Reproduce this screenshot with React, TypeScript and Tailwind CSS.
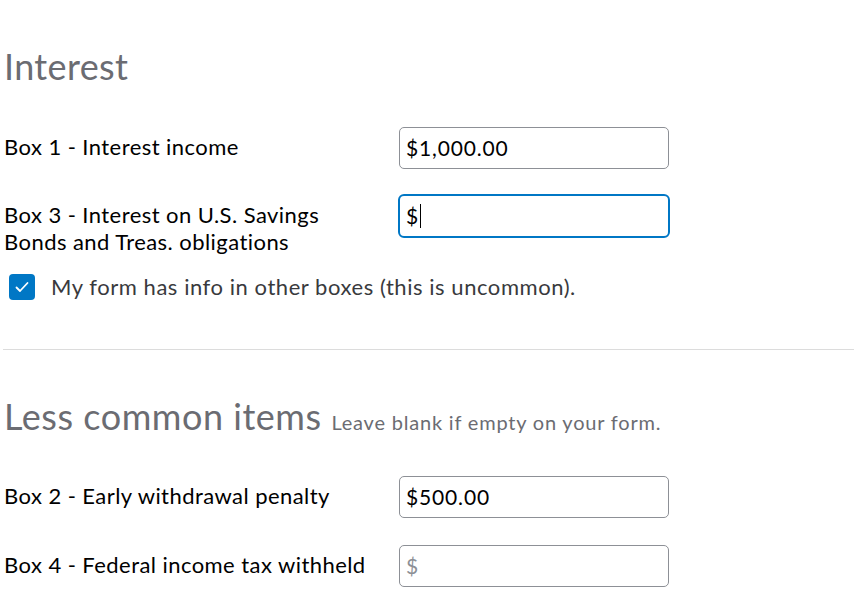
import React from "react";

const font = { fontFamily: "Lato, 'Noto Sans', sans-serif" };

function Row({ label, value, focused, placeholder, tight }: { label: React.ReactNode; value?: string; focused?: boolean; placeholder?: boolean; tight?: boolean }) {
  return (
    <div className="flex items-start">
      <div
        className={
          tight
            ? "w-[395px] shrink-0 pt-[7px] pl-[4px] text-[22px] leading-[26.5px] tracking-[0.02em] text-black"
            : "w-[395px] shrink-0 pt-[8px] pl-[4px] text-[22px] leading-[24px] tracking-[0.02em] text-black"
        }
      >
        {label}
      </div>
      <div
        className={
          focused
            ? "w-[272px] h-[44px] ml-[3px] -mt-[1px] rounded-[6px] border-2 border-[#0077c5] flex items-center pl-[6px] text-[21px] tracking-[0.04em] text-black"
            : "w-[270px] h-[42px] ml-[4px] rounded-[5px] border border-[#8d9096] flex items-center pl-[6px] text-[21px] tracking-[0.04em] text-black"
        }
      >
        {placeholder ? <span className="text-[#8d9096]">$</span> : value}
        {focused && <span className="w-px h-[24px] bg-black ml-px" />}
      </div>
    </div>
  );
}

export default function App() {
  return (
    <main className="min-h-screen bg-white" style={font}>
      <h1 className="pt-[44px] pl-[4px] text-[36px] leading-[44px] tracking-[0.01em] text-[#6b6c72]">Interest</h1>

      <div className="mt-[39px]">
        <Row label="Box 1 - Interest income" value="$1,000.00" />
      </div>
      <div className="mt-[26px]">
        <Row
          tight
          label={
            <>
              Box 3 - Interest on U.S. Savings
              <br />
              Bonds and Treas. obligations
            </>
          }
          value="$"
          focused
        />
      </div>

      <label className="flex items-center mt-[15px] pl-[9px]">
        <span className="w-[26px] h-[26px] rounded-[4px] bg-[#0077c5] flex items-center justify-center">
          <svg width="18" height="18" viewBox="0 0 18 18" fill="none" stroke="white" strokeWidth="1.8" strokeLinecap="round" strokeLinejoin="round">
            <path d="M3.5 9.5l3.5 3.5L14.5 5" />
          </svg>
        </span>
        <span className="ml-[16px] text-[22px] tracking-[0.025em] text-[#393a3d]">My form has info in other boxes (this is uncommon).</span>
      </label>

      <div className="mt-[46px] ml-[3px] h-px bg-[#dcdcdc]" />

      <h2 className="mt-[44px] pl-[4px] text-[36px] leading-[44px] tracking-[0.015em] text-[#6b6c72]">
        Less common items <span className="text-[20px] tracking-[0.04em] text-[#6b6c72]">Leave blank if empty on your form.</span>
      </h2>

      <div className="mt-[32px]">
        <Row label="Box 2 - Early withdrawal penalty" value="$500.00" />
      </div>
      <div className="mt-[27px]">
        <Row label="Box 4 - Federal income tax withheld" placeholder />
      </div>
    </main>
  );
}
